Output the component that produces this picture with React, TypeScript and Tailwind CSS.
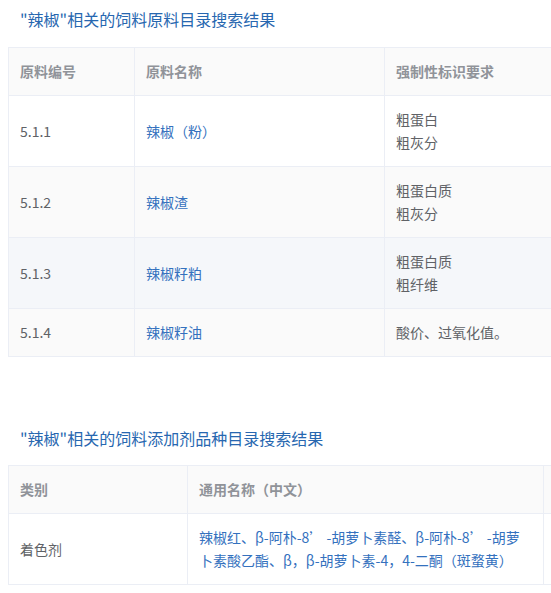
import React from 'react';

const FONT = "font-['Noto_Sans_CJK_SC','Noto_Sans',sans-serif]";

type Row = { code: string; name: string; req: string[]; bg: string };

const MATERIALS: Row[] = [
  { code: '5.1.1', name: '辣椒（粉）', req: ['粗蛋白', '粗灰分'], bg: 'bg-white' },
  { code: '5.1.2', name: '辣椒渣', req: ['粗蛋白质', '粗灰分'], bg: 'bg-[#fafafa]' },
  { code: '5.1.3', name: '辣椒籽粕', req: ['粗蛋白质', '粗纤维'], bg: 'bg-[#f5f7fa]' },
  { code: '5.1.4', name: '辣椒籽油', req: ['酸价、过氧化值。'], bg: 'bg-[#fafafa]' },
];

const th = 'border border-[#ebeef5] px-[11px] py-3 leading-[23px] text-left font-bold text-[#909399]';
const td = 'border border-[#ebeef5] px-[11px] py-3 leading-[23px] text-left align-middle';

function Title({ children }: { children: React.ReactNode }) {
  return <h3 className="px-3 text-base leading-6 text-[#2767b0]">{children}</h3>;
}

export default function App() {
  return (
    <div className={`w-[551px] h-[593px] overflow-hidden bg-white ${FONT} text-sm text-[#606266]`}>
      <div className="pl-2 pt-[7px]">
        <Title>"辣椒"相关的饲料原料目录搜索结果</Title>

        <table className="mt-4 w-[760px] table-fixed border-collapse">
          <colgroup>
            <col className="w-[126px]" />
            <col className="w-[250px]" />
            <col className="w-[384px]" />
          </colgroup>
          <thead>
            <tr className="bg-[#fafafa]">
              <th className={th}>原料编号</th>
              <th className={th}>原料名称</th>
              <th className={th}>强制性标识要求</th>
            </tr>
          </thead>
          <tbody>
            {MATERIALS.map((r) => (
              <tr key={r.code} className={r.bg}>
                <td className={td}>{r.code}</td>
                <td className={`${td} text-[#3471be]`}>{r.name}</td>
                <td className={td}>
                  {r.req.map((x) => (
                    <div key={x}>{x}</div>
                  ))}
                </td>
              </tr>
            ))}
          </tbody>
        </table>

        <div className="mt-[69px]">
          <Title>"辣椒"相关的饲料添加剂品种目录搜索结果</Title>
        </div>

        <table className="mt-[15px] w-[760px] table-fixed border-collapse">
          <colgroup>
            <col className="w-[179px]" />
            <col className="w-[356px]" />
            <col className="w-[225px]" />
          </colgroup>
          <thead>
            <tr className="bg-[#fafafa]">
              <th className={th}>类别</th>
              <th className={th}>通用名称（中文）</th>
              <th className={th}></th>
            </tr>
          </thead>
          <tbody>
            <tr className="bg-white">
              <td className={td}>着色剂</td>
              <td className={`${td} text-[#3471be]`}>
                辣椒红、β-阿朴-8’ -胡萝卜素醛、β-阿朴-8’ -胡萝卜素酸乙酯、β，β-胡萝卜素-4，4-二酮（斑蝥黄）
              </td>
              <td className={td}></td>
            </tr>
          </tbody>
        </table>
      </div>
    </div>
  );
}
